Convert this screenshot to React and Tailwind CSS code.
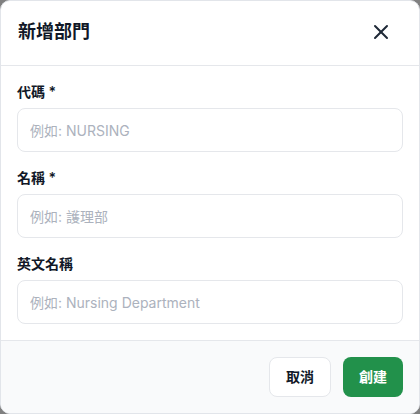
import React, { useState } from 'react';
import { X } from 'lucide-react';

const fields = [
  { key: 'code', label: '代碼', required: true, placeholder: '例如: NURSING' },
  { key: 'name', label: '名稱', required: true, placeholder: '例如: 護理部' },
  { key: 'nameEn', label: '英文名稱', required: false, placeholder: '例如: Nursing Department' },
];

const App = () => {
  const [form, setForm] = useState({ code: '', name: '', nameEn: '' });

  return (
    <div
      className="min-h-screen bg-[#808080]"
      style={{ fontFamily: "Inter, 'Noto Sans CJK TC', 'Noto Sans', sans-serif" }}
    >
      <div className="w-[420px] h-[414px] bg-white rounded-[10px] border border-[#e2e5ea] overflow-hidden flex flex-col">
        {/* Header */}
        <div className="flex items-center justify-between pl-[17px] pr-[26px] pt-[17px] pb-[19px] border-b border-[#e5e7eb]">
          <h2 className="text-lg leading-7 font-bold text-[#111827]">新增部門</h2>
          <button className="text-[#1f2937]">
            <X className="w-6 h-6" strokeWidth={2} />
          </button>
        </div>

        {/* Body */}
        <div className="flex-1 px-4 pt-4 flex flex-col gap-4">
          {fields.map(f => (
            <div key={f.key} className="flex flex-col gap-1.5">
              <label className="text-sm leading-5 font-semibold text-[#111827]">
                {f.label}{f.required && ' *'}
              </label>
              <input
                value={form[f.key]}
                onChange={e => setForm({ ...form, [f.key]: e.target.value })}
                placeholder={f.placeholder}
                className="h-[44px] w-full px-3 text-sm rounded-lg border border-[#e5e7eb] bg-white text-[#111827] placeholder:text-[#acb2bd] outline-none"
              />
            </div>
          ))}
        </div>

        {/* Footer */}
        <div className="flex justify-end gap-3 px-4 pt-4 pb-4 bg-[#f9fafb] border-t border-[#e5e7eb]">
          <button className="h-10 px-4 rounded-lg border border-[#e5e7eb] bg-white text-sm font-semibold text-[#111827]">
            取消
          </button>
          <button className="h-10 px-4 rounded-lg bg-[#22914b] text-sm font-semibold text-white">
            創建
          </button>
        </div>
      </div>
    </div>
  );
};

export default App;
